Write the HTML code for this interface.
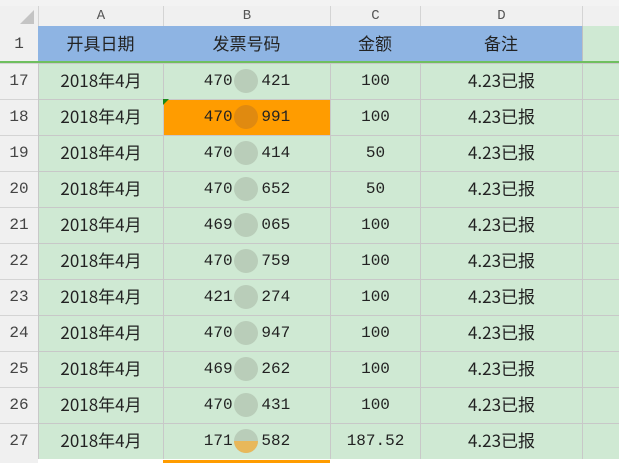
<!DOCTYPE html><html><head><meta charset="utf-8"><style>
body{margin:0;width:619px;height:463px;overflow:hidden;background:#fff;font-family:"Liberation Mono","Noto Sans CJK SC",monospace;}
.g{position:absolute;}
.c{position:absolute;text-align:center;line-height:34px;font-size:16px;color:#222;box-sizing:border-box;white-space:nowrap;}
.k{font-family:"Noto Sans CJK SC",sans-serif;font-size:17px;line-height:31px;}
.b{position:absolute;width:24px;height:24px;border-radius:50%;background:#b9cdb9;}
</style></head><body>
<div class="g" style="left:0;top:0;width:619px;height:6px;background:#f3f3f3"></div>
<div class="g" style="left:0;top:6px;width:619px;height:20px;background:#f0f0f0;border-bottom:1px solid #d0d0d0"></div>
<div class="g" style="left:0;top:26px;width:38px;height:437px;background:#f0f0f0"></div>
<svg class="g" style="left:20px;top:10px" width="14" height="14"><polygon points="14,0 14,14 0,14" fill="#c4c4c4"/></svg>
<div id="t"></div>
<script>
var cols=[38,163,330,420,582,619],L=['A','B','C','D',''];
var h='';
for(var i=0;i<5;i++){h+='<div class="c" style="left:'+cols[i]+'px;top:6px;width:'+(cols[i+1]-cols[i])+'px;height:20px;line-height:20px;font-size:14px;color:#555;border-left:1px solid #d4d4d4">'+L[i]+'</div>';}
var hd=['开具日期','发票号码','金额','备注'];
for(var i=0;i<4;i++){h+='<div class="c k" style="left:'+cols[i]+'px;top:26px;width:'+(cols[i+1]-cols[i])+'px;height:36px;line-height:34px;background:#8eb4e3">'+hd[i]+'</div>';}
h+='<div class="c" style="left:582px;top:26px;width:37px;height:36px;background:#cfe9d3;border-left:1px solid #c0c0c0"></div>';
h+='<div class="c" style="left:0;top:26px;width:38px;height:36px;line-height:36px;color:#444">1</div>';
h+='<div class="g" style="left:0;top:61px;width:619px;height:2px;background:#6fbf5f"></div>';
var n=[['470','421','100'],['470','991','100'],['470','414','50'],['470','652','50'],['469','065','100'],['470','759','100'],['421','274','100'],['470','947','100'],['469','262','100'],['470','431','100'],['171','582','187.52']];
for(var r=0;r<11;r++){var y=63+r*36;
h+='<div class="c" style="left:0;top:'+y+'px;width:38px;height:36px;color:#444;border-top:1px solid #d4d4d4">'+(17+r)+'</div>';
var v=['2018年4月',n[r][0]+'&nbsp;&nbsp;&nbsp;'+n[r][1],n[r][2],'4.23已报',''];
var kc=['k','','','k',''];
for(var i=0;i<5;i++){var bg=(r==1&&i==1)?'#ff9c00':'#cfe9d3';
h+='<div class="c '+kc[i]+'" style="left:'+cols[i]+'px;top:'+y+'px;width:'+(cols[i+1]-cols[i])+'px;height:36px;background:'+bg+';border-left:1px solid #c8c8c8;border-top:1px solid #c8c8c8">'+v[i]+'</div>';}
var bc=r==1?'#e08a10':'#b9cdb9';
h+='<div class="b" style="left:234px;top:'+(y+6)+'px;background:'+bc+'"></div>';
if(r==10)h+='<div class="g" style="left:234px;top:'+(y+18)+'px;width:24px;height:12px;border-radius:0 0 12px 12px;background:#e8b85a"></div>';
}
h+='<div class="g" style="left:163px;top:99px;width:0;height:0;border-top:6px solid #1a8a1a;border-right:6px solid transparent"></div>';
h+='<div class="g" style="left:163px;top:460px;width:167px;height:3px;background:#ff9c00"></div>';
document.getElementById('t').innerHTML=h;
</script>
</body></html>
